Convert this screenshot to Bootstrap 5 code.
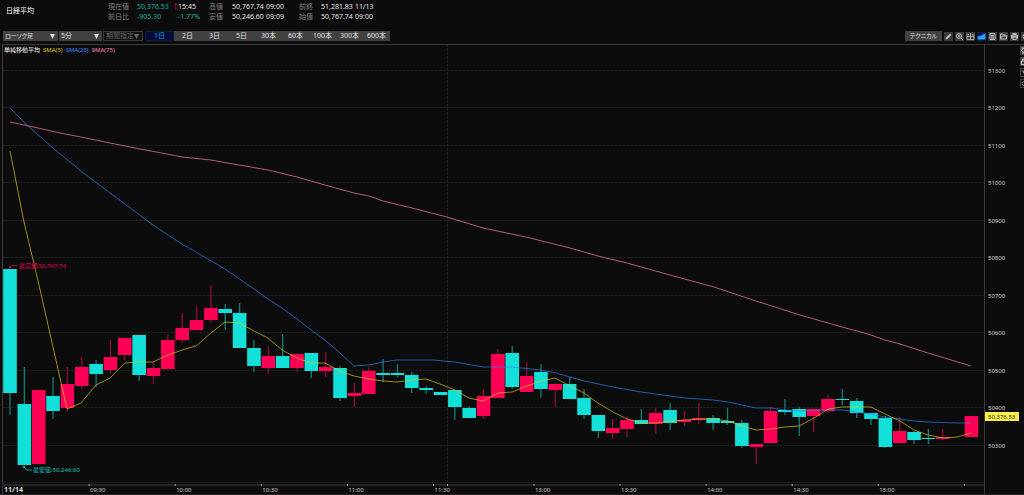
<!DOCTYPE html>
<html lang="ja" data-bs-theme="dark">
<head>
<meta charset="utf-8">
<meta name="viewport" content="width=device-width, initial-scale=1">
<title>日経平均</title>
<link href="https://cdn.jsdelivr.net/npm/bootstrap@5.3.0/dist/css/bootstrap.min.css" rel="stylesheet">
<style>
  body { background: #0c0c0c; color: #ddd; font: 7px/10px "Noto Sans", "Noto Sans CJK JP", sans-serif; font-feature-settings: "palt"; }
  .quote-bar { height: 31px; }
  .quote-name { width: 108px; font-size: 7px; font-weight: 400; line-height: 10px; padding: 6px 0 0 6px; }
  .quote-grid { display: grid; grid-template-columns: 29px 35px 6px 31px 23px 34px 33px 22px 34px 30px; grid-template-rows: 10px 10px; white-space: nowrap; color: #e6e6e6; padding-top: 2px; }
  .quote-grid dt { font-weight: 400; color: #808080; }
  .quote-grid dd { margin: 0; }
  .quote-grid .fall { color: #18b0a6; }
  .quote-grid .tick-up { color: #e8004c; }
  .tool-bar { height: 13px; padding-left: 3px; gap: 1px; }
  .tool-bar select, .tool-bar button { font-size: 7px; font-feature-settings: "palt"; line-height: 10px; height: 10px; border: 0; border-radius: 0; padding: 0; color: #e0e0e0; background-color: #414141; }
  .tool-bar select { appearance: none; padding-left: 2px; background-image: url("data:image/svg+xml,%3Csvg xmlns='http://www.w3.org/2000/svg' width='5' height='5'%3E%3Cpath d='M0 0h5L2.500 5z' fill='%23ddd'/%3E%3C/svg%3E"); background-repeat: no-repeat; background-position: right 3px center; }
  .tool-bar select:disabled { color: #666; background-color: #111; border: 1px solid #3c3c3c; line-height: 8px; opacity: 1; background-image: url("data:image/svg+xml,%3Csvg xmlns='http://www.w3.org/2000/svg' width='5' height='5'%3E%3Cpath d='M0 0h5L2.500 5z' fill='%23666'/%3E%3C/svg%3E"); }
  .tool-bar .pick-type { width: 55px; font-size: 6px; } .pick-step { width: 43px; } .pick-range { width: 40px; }
  .span-row { width: 246px; padding-left: 1px; }
  .tool-bar .span-btn { flex: 1 1 0; }
  .tool-bar .span-btn.active { background: #020d38; color: #1d9bf0; border: 1px solid #101c40; line-height: 8px; }
  .icon-row { gap: 2px; margin-right: -6px; }
  .tool-bar .icon-row .tech-btn { width: 37px; font-size: 6px; }
  .tool-bar .icon-row .ico-btn { width: 9px; height: 9px; background: #3a3a3a; margin-top: 1px; }
  .tool-bar .icon-row .ico-btn.active { background: #041a50; }
  .ico-btn svg { display: block; width: 9px; height: 9px; }
  .chart-pane { min-height: 300px; }
  .chart-pane svg.plot { position: absolute; inset: 0; width: 100%; height: 100%; }
  .plot text { font-size: 6px; fill: #d0d0d0; }
  .legend-row { position: absolute; left: 4px; top: 1px; gap: 3px; font-size: 6px; color: #eee; }
  .sma-short { color: #d8cc20; } .sma-mid { color: #3a8cff; } .sma-long { color: #ff8ab0; }
  .side-tools { position: absolute; right: -5px; top: 2px; gap: 2px; }
  .side-tools button { width: 9px; height: 9px; padding: 0; border: 1px solid #444; background: #0c0c0c; }
  .side-tools button.on { background: #3a3a3a; }
  .side-tools svg { display: block; width: 7px; height: 7px; }
</style>
</head>
<body class="d-flex flex-column vh-100 overflow-hidden">
<header class="quote-bar d-flex flex-shrink-0">
  <h1 class="quote-name mb-0 flex-shrink-0">日経平均</h1>
  <dl class="quote-grid mb-0" aria-label="株価情報">
    <dt>現在値</dt><dd class="fall">50,376.53</dd><dd class="tick-up">↑</dd><dd>15:45</dd>
    <dt>高値</dt><dd>50,767.74</dd><dd>09:00</dd>
    <dt>前終</dt><dd>51,281.83</dd><dd>11/13</dd>
    <dt>前日比</dt><dd class="fall">-905.30</dd><dd></dd><dd class="fall">-1.77%</dd>
    <dt>安値</dt><dd>50,246.60</dd><dd>09:09</dd>
    <dt>始値</dt><dd>50,767.74</dd><dd>09:00</dd>
  </dl>
</header>
<nav class="tool-bar d-flex align-items-start flex-shrink-0 overflow-hidden" aria-label="チャート操作">
  <select class="pick-type" aria-label="チャート種類"><option>ローソク足</option></select>
  <select class="pick-step" aria-label="足種"><option>5分</option></select>
  <select class="pick-range" aria-label="期間指定" disabled><option>期間指定</option></select>
  <div class="span-row d-flex">
    <button class="span-btn active">1日</button><button class="span-btn">2日</button><button class="span-btn">3日</button><button class="span-btn">5日</button><button class="span-btn">30本</button><button class="span-btn">60本</button><button class="span-btn">100本</button><button class="span-btn">300本</button><button class="span-btn">600本</button>
  </div>
  <div class="icon-row d-flex ms-auto">
    <button class="tech-btn">テクニカル</button>
    <button class="ico-btn" aria-label="描画"><svg viewBox="0 0 18 18"><path d="M3 15l1-4 8-8 3 3-8 8z" fill="#bbb"/></svg></button>
    <button class="ico-btn" aria-label="拡大"><svg viewBox="0 0 18 18" fill="none" stroke="#bbb" stroke-width="2"><circle cx="8" cy="8" r="5"/><path d="M12 12l4 4M5.500 8h5M8 5.500v5"/></svg></button>
    <button class="ico-btn" aria-label="十字線"><svg viewBox="0 0 18 18" fill="none" stroke="#bbb" stroke-width="1.500"><path d="M2 3v12h14V3M9 2v14M2 9h14M5 4v3M13 4v3"/></svg></button>
    <button class="ico-btn active" aria-label="出来高"><svg viewBox="0 0 18 18"><path d="M1 15V9l6-1 5-3 5-2v12z" fill="#2fa0f5"/></svg></button>
    <button class="ico-btn" aria-label="一覧"><svg viewBox="0 0 18 18" fill="none" stroke="#bbb" stroke-width="2"><path d="M4 3h10v12H4zM6 7h6M6 10h6M6 12.500h6"/></svg></button>
    <button class="ico-btn" aria-label="開く"><svg viewBox="0 0 18 18" fill="none" stroke="#bbb" stroke-width="2"><path d="M3 14V4h5l1 2h5v2M3 14l3-6h10l-2 6z"/></svg></button>
    <button class="ico-btn" aria-label="印刷"><svg viewBox="0 0 18 18"><path d="M5 2h8v4h3v7h-3v3H5v-3H2V6h3z" fill="#bbb"/><path d="M7 11h5v3H7zM5 7h8v1H5z" fill="#444"/></svg></button>
    <button class="ico-btn" aria-label="設定"><svg viewBox="0 0 18 18" fill="none" stroke="#bbb" stroke-width="2"><circle cx="9" cy="9" r="5"/></svg></button>
  </div>
</nav>
<main class="chart-pane position-relative flex-grow-1">
  <svg class="plot" id="plot" role="img" aria-label="日経平均 5分足"></svg>
  <div class="legend-row d-flex text-nowrap">
    <span>単純移動平均</span><span class="sma-short">SMA(5)</span><span class="sma-mid">SMA(25)</span><span class="sma-long">SMA(75)</span>
  </div>
  <div class="side-tools d-flex flex-column">
    <button class="on" aria-label="移動"><svg viewBox="0 0 14 14" stroke="#ccc" stroke-width="2" fill="none"><path d="M1 2h8M5 2l-4 5 5 4M2 12h8"/></svg></button>
    <button class="on" aria-label="ロック"><svg viewBox="0 0 14 14" stroke="#ccc" stroke-width="2" fill="none"><path d="M1 6h10v7H1zM3 6V2h6v4"/></svg></button>
    <button aria-label="線"><svg viewBox="0 0 14 14" stroke="#888" stroke-width="2" fill="none"><path d="M1 4h8M5 4v5"/></svg></button>
    <button aria-label="円"><svg viewBox="0 0 14 14" stroke="#888" stroke-width="2" fill="none"><circle cx="6" cy="7" r="4"/></svg></button>
  </div>
</main>
<script>
// One row per 5-minute bar: slot, wick top, body top, body bottom, wick bottom, u = up / d = down
const bars = `0 269 269 393 415 d|1 367 404 465 465 d|2 390 390 464 464 u|3 377 396 411 419 d|4 367 384 408 412 u|5 357 367 386 389 u
6 360 364 374 387 d|7 340 357 370 374 u|8 338 338 355 360 u|9 335 335 375 381 d|10 361 368 376 384 u|11 334 340 369 369 u
12 313 328 340 343 u|13 306 320 330 330 u|14 285 308 320 323 u|15 304 309 313 330 d|16 303 313 348 348 d|17 340 348 366 372 d
18 346 356 368 374 u|19 334 356 368 368 d|20 354 354 368 372 u|21 353 353 371 378 d|22 352 367 371 377 u|23 366 368 398 401 d
24 383 393 396 407 u|25 367 371 394 394 u|26 359 373 375 382 d|27 364 373 375 377 d|28 372 375 388 393 d|29 386 388 390 394 d
30 392 392 395 395 d|31 390 390 407 420 d|32 406 408 418 418 d|33 389 396 416 419 u|34 349 354 398 398 u|35 346 353 387 389 d
36 362 376 392 392 u|37 364 372 389 398 d|38 383 384 390 407 u|39 377 384 399 399 d|40 389 398 415 419 d|41 415 415 431 438 d
42 419 428 433 439 u|43 416 420 429 437 u|44 409 420 424 424 d|45 408 413 424 434 u|46 403 410 423 430 d|47 411 420 422 426 u
48 403 418 420 424 u|49 415 418 423 430 d|50 408 421 423 425 d|51 420 423 446 448 d|52 444 444 447 464 u|53 407 411 443 443 u
54 399 410 412 415 d|55 407 409 417 436 d|56 409 409 416 432 u|57 394 399 411 413 u|58 389 399 400 405 d|59 398 401 413 418 d
60 413 413 419 425 d|61 416 418 447 448 d|62 417 431 443 443 u|63 431 432 440 444 d|64 429 438 439 444 d|65 429 437 439 440 u|67 416 416 437 437 u`;
const averages = [
  ['#ff86a8', '10 122 38 128 60 133 81 137 110 143 140 149 167 154 182 157 211 160 239 165 268 170 297 177 325 185 354 193 369 196 383 201 412 208 447 217 483 228 526 237 570 248 598 256 627 263 670 275 714 287 756 301 800 315 842 327 857 331 871 335 885 340 900 344 928 353 971 366'],
  ['#2f80f5', '10 108 29 127 53 148 81 171 110 193 125 204 153 225 182 244 225 269 254 289 268 299 282 308 297 319 311 330 325 340 340 353 354 366 369 365 383 362 397 360 433 360 455 362 483 367 512 367 541 370 556 373 584 381 613 387 641 392 685 398 713 400 728 402 756 408 771 408 785 410 799 411 828 410 842 410 857 412 871 414 885 417 900 419 914 421 928 422 957 423 971 423'],
  ['#d8c81e', '10 151 24 222 39 285 53 347 67 409 81 403 96 385 110 378 125 363 139 362 153 362 168 355 182 350 196 346 211 333 225 322 239 323 254 331 268 338 282 350 297 358 311 363 325 363 340 371 354 376 369 379 383 381 397 382 412 380 426 379 440 384 455 390 469 398 483 401 498 393 512 392 527 386 541 381 555 378 570 386 584 393 598 403 613 412 627 419 641 423 656 423 670 421 685 420 699 419 713 419 728 421 742 426 756 430 771 429 785 427 799 426 814 418 828 409 842 407 871 407 885 414 900 421 914 430 928 435 943 438 957 437 971 433']
];
const labels = { 6: '09:30', 12: '10:00', 18: '10:30', 24: '11:00', 30: '11:30', 37: '13:00', 43: '13:30', 49: '14:00', 55: '14:30', 61: '15:00', 67: '' };

function draw() {
  const svg = document.getElementById('plot');
  const W = svg.clientWidth, H = svg.clientHeight, R = W - 40;
  const X = v => v * R / 984, Y = v => (v - 44) * (H - 11) / 440;
  let s = '';
  const line = (x1, y1, x2, y2, c, more = '') => s += `<line x1="${x1}" y1="${y1}" x2="${x2}" y2="${y2}" stroke="${c}" ${more}/>`;
  const text = (x, y, t, more = '') => s += `<text x="${x}" y="${y}" ${more}>${t}</text>`;
  for (let i = 0; i < 12; i++) {
    const y = Math.round(Y(70 + 37.45 * i)) + 0.5;
    line(3, y, R, y, '#1f1f1f', 'stroke-dasharray="3 1"');
    if (i < 11) text(R + 4, y + 2.5, 51300 - 100 * i);
  }
  line(X(447.5), 0, X(447.5), H - 11, '#1f1f1f', 'stroke-dasharray="3 1"');
  for (const b of bars.split(/[|\n]/)) {
    const [i, hi, top, bot, lo, d] = b.trim().split(' ');
    const x = X(10 + 14.35 * i), w = X(13.6), up = d === 'u';
    line(x, Y(+hi), x, Y(+lo), up ? '#8f0c3a' : '#0f7f7b', 'stroke-width="1.3"');
    s += `<rect x="${x - w / 2}" y="${Y(+top)}" width="${w}" height="${Y(+bot) - Y(+top)}" fill="${up ? '#ff0055' : '#14e0da'}"/>`;
  }
  for (const [c, list] of averages) {
    const n = list.split(' ').map(Number);
    let p = '';
    for (let i = 0; i < n.length; i += 2) p += X(n[i]) + ',' + Y(n[i + 1]) + ' ';
    s += `<polyline points="${p}" fill="none" stroke="${c}" stroke-opacity=".68"/>`;
  }
  s += `<path d="M${X(10)} ${Y(267.5)}l2 -2h5" fill="none" stroke="#b0003c"/><circle cx="${X(10)}" cy="${Y(267.5)}" r="1" fill="#ff0055"/>`;
  text(X(19), Y(268), '最高値:50,767.74', 'style="fill:#e8004c"');
  s += `<path d="M${X(24)} ${Y(467)}l3 3h5" fill="none" stroke="#0f9d94"/><circle cx="${X(24)}" cy="${Y(467)}" r="1" fill="#14e0da"/>`;
  text(X(33), Y(472), '最安値:50,246.60', 'style="fill:#14c4bc"');
  line(2, 0.5, W, 0.5, '#3a3a3a');
  line(2.5, 0, 2.5, H - 1, '#3a3a3a');
  line(R + .5, 0, R + .5, H, '#3a3a3a');
  line(2, H - 10, R, H - 10, '#262626', 'stroke-width="2"');
  line(0, H - .5, W, H - .5, '#262222');
  text(4, H - 3, '11/14', 'style="font-size:7px;font-weight:700;fill:#ddd"');
  for (const i in labels) {
    const x = X(3 + 14.35 * i);
    line(x, H - 11, x, H - 9, '#999');
    text(x + 1, H - 3, labels[i]);
  }
  line(X(447.5), H - 11, X(447.5), H - 9, '#999');
  s += `<rect x="${R + 1}" y="${Y(412)}" width="34" height="9" fill="#fbf04e"/>`;
  text(R + 4, Y(412) + 6.5, '50,376.53', 'style="fill:#222"');
  svg.innerHTML = s;
}
draw();
addEventListener('resize', draw);
</script>
<script src="https://cdn.jsdelivr.net/npm/bootstrap@5.3.0/dist/js/bootstrap.bundle.min.js"></script>
</body>
</html>
